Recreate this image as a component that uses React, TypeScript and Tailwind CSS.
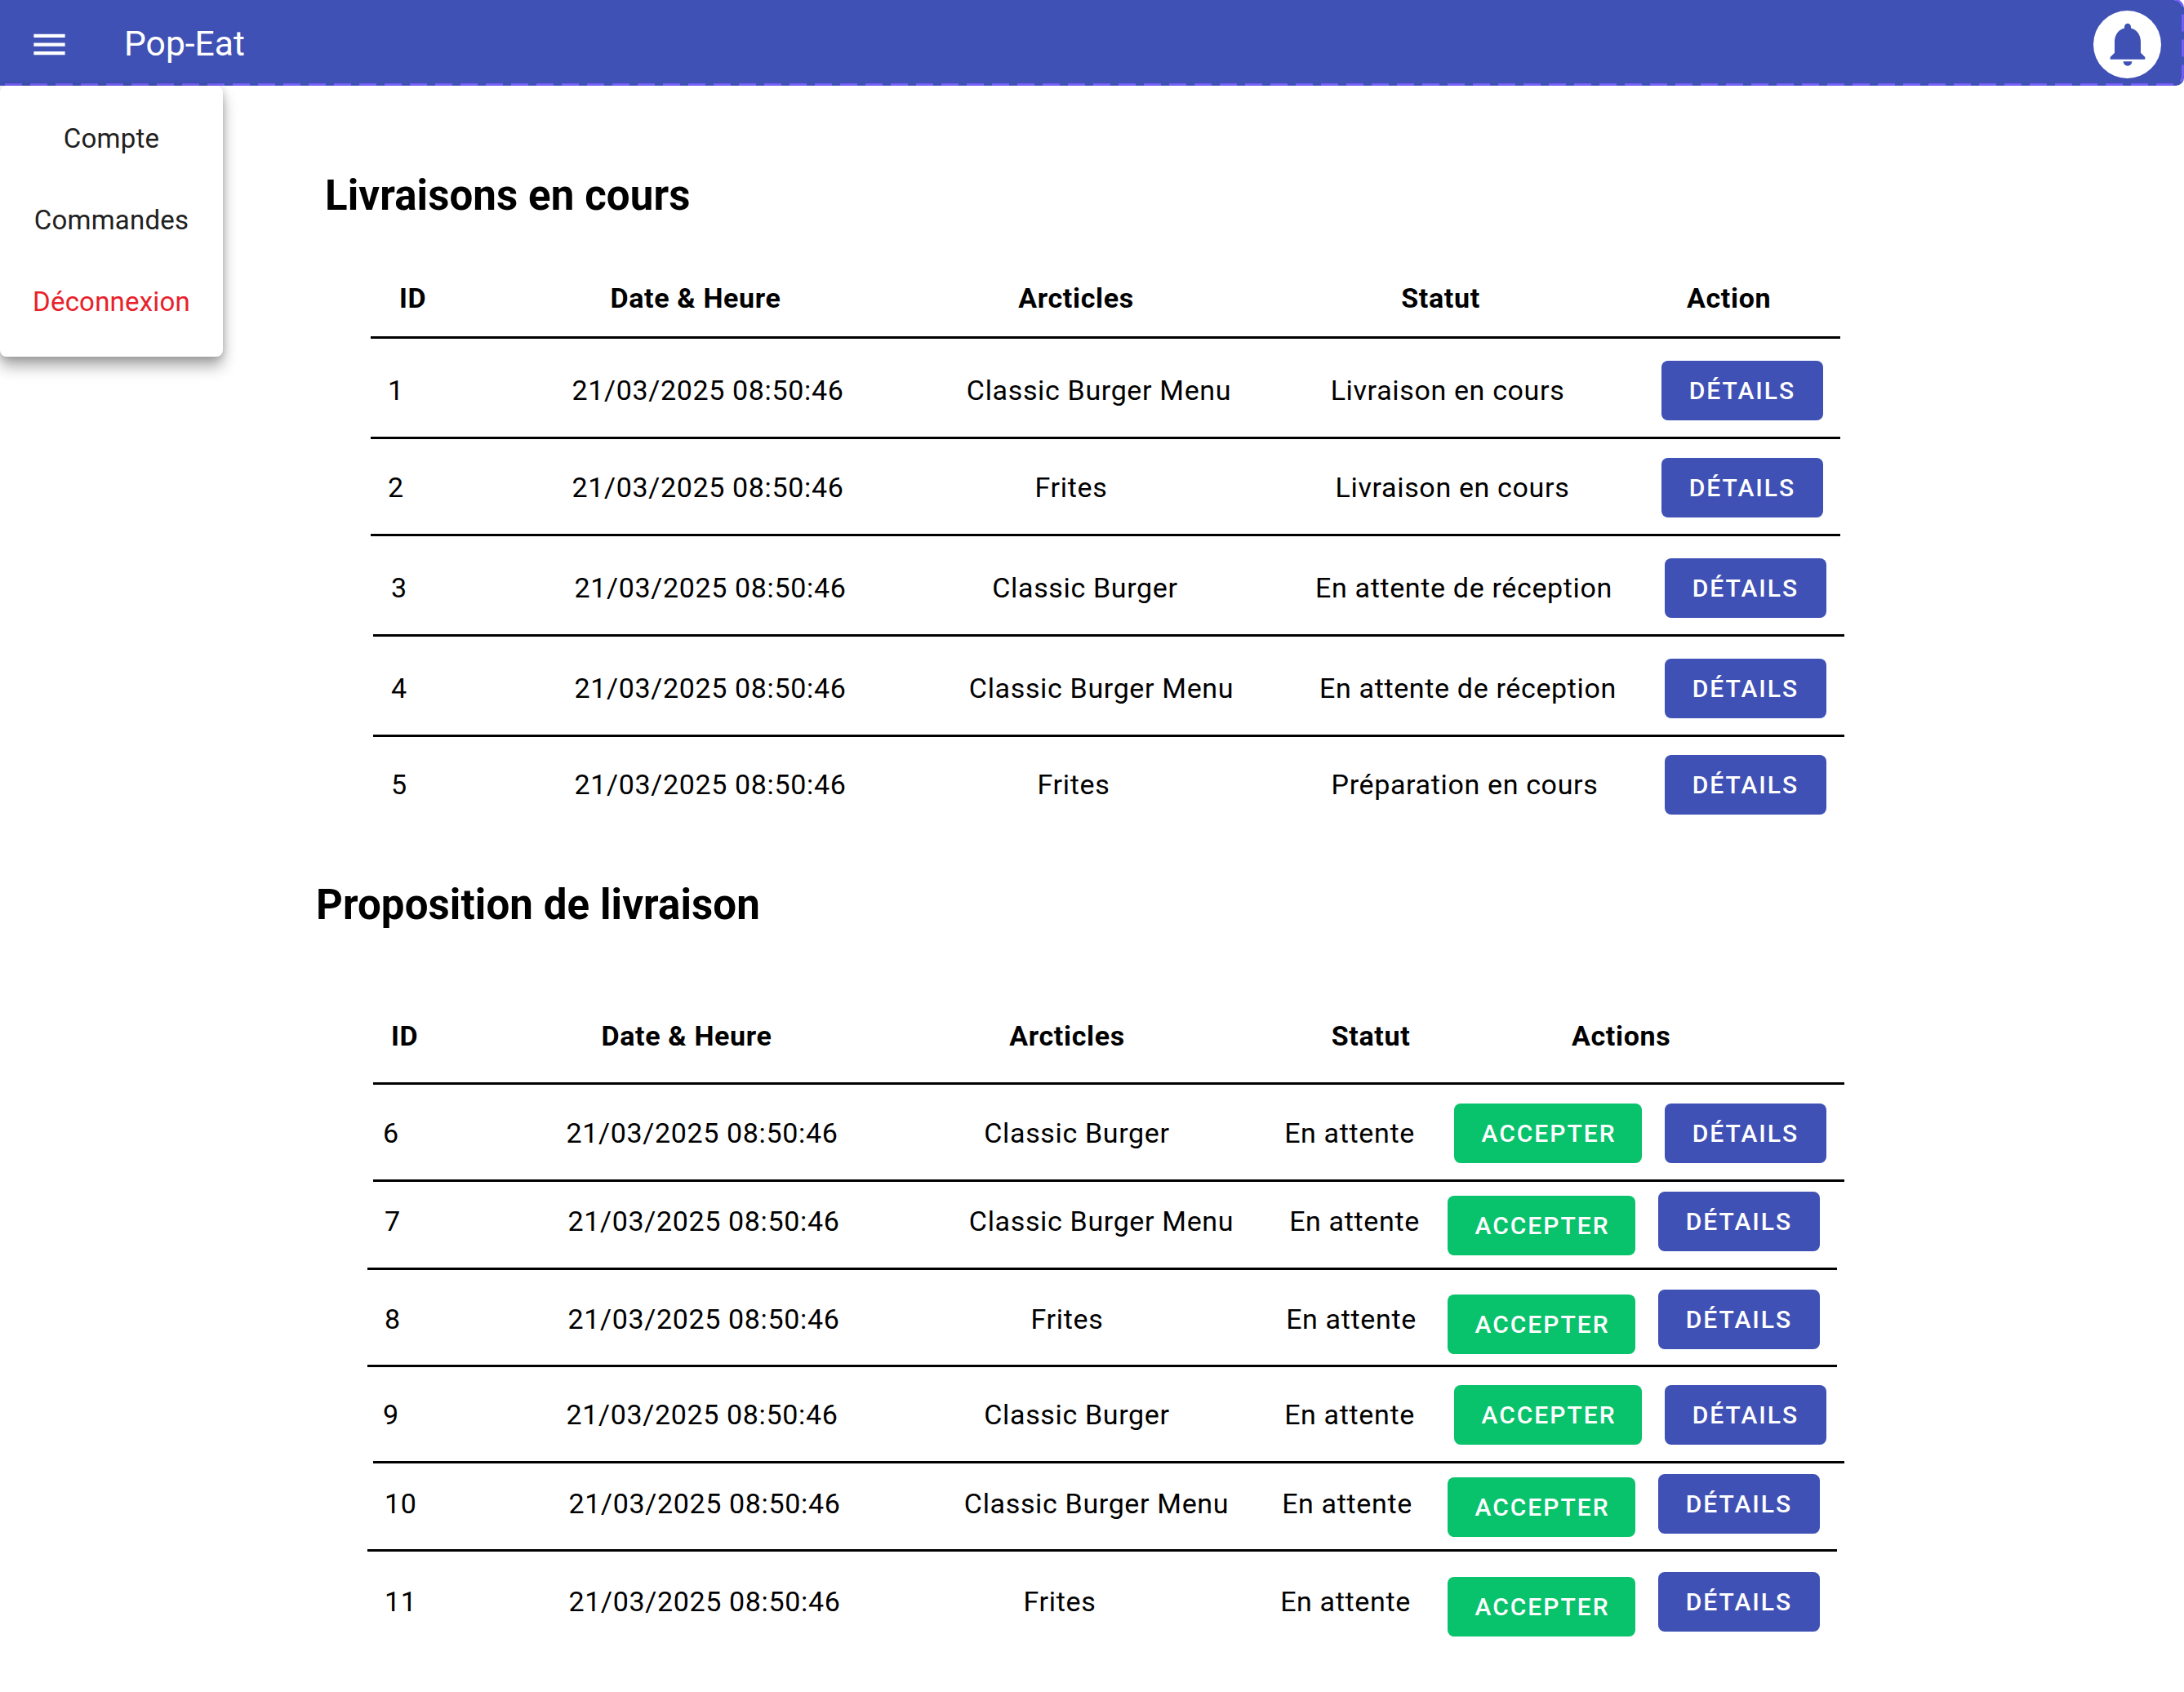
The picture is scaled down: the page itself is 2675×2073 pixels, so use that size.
import type { ReactNode } from "react";

const textCell = "flex justify-center whitespace-nowrap";

function DetailsButton({ className = "" }: { className?: string }) {
  return (
    <button className={`flex h-[73px] w-[198px] shrink-0 items-center justify-center rounded-[8px] bg-[#3f51b5] text-[30px] font-medium tracking-[2px] text-white ${className}`}>
      DÉTAILS
    </button>
  );
}

function AcceptButton({ className = "" }: { className?: string }) {
  return (
    <button className={`flex h-[73px] w-[230px] shrink-0 items-center justify-center rounded-[8px] bg-[#09c26c] pl-[2px] text-[30px] font-medium tracking-[2px] text-white ${className}`}>
      ACCEPTER
    </button>
  );
}

type RowProps = {
  grid: string;
  id: string;
  idPad: string;
  actionPad: string;
  article: string;
  status: string;
  date?: string;
  children: ReactNode;
};

function Row({ grid, id, idPad, actionPad, article, status, date = "21/03/2025 08:50:46", children }: RowProps) {
  return (
    <div className={`grid h-full items-center text-[34px] tracking-[0.65px] text-black ${grid}`}>
      <span className={idPad}>{id}</span>
      <span className={textCell}>{date}</span>
      <span className={textCell}>{article}</span>
      <span className={textCell}>{status}</span>
      <div className={`flex items-center justify-end ${actionPad}`}>{children}</div>
    </div>
  );
}

export default function App() {
  return (
    <div className="relative min-h-[2073px] overflow-hidden bg-white font-['Roboto',sans-serif]">
      <header className="relative flex h-[105px] items-center rounded-r-[10px] bg-[#3f51b5] pt-[3px] pr-[28px] pl-[35px] text-white">
        <svg viewBox="0 0 24 24" className="h-[51px] w-[51px] fill-white">
          <path d="M3 18h18v-2H3zm0-5h18v-2H3zm0-7h18v2H3z" />
        </svg>
        <span className="ml-[66px] text-[42.6px]">Pop-Eat</span>
        <div className="ml-auto flex h-[83px] w-[83px] items-center justify-center rounded-full bg-white">
          <svg viewBox="0 0 24 24" className="h-[64px] w-[64px] fill-[#3f51b5]">
            <path d="M12 22c1.1 0 2-.9 2-2h-4c0 1.1.89 2 2 2zm6-6v-5c0-3.07-1.64-5.64-4.5-6.32V4c0-.83-.67-1.5-1.5-1.5s-1.5.67-1.5 1.5v.68C7.63 5.36 6 7.92 6 11v5l-2 2v1h16v-1l-2-2z" />
          </svg>
        </div>
        <svg className="pointer-events-none absolute inset-0 h-full w-full fill-none stroke-[#7b61ff] stroke-[2.5]" strokeDasharray="21 10">
          <path d="M6 103.5H2663a10.5 10.5 0 0 0 10.5-10.5V10a10.5 10.5 0 0 0-10.5-10.5" />
        </svg>
      </header>

      <nav className="absolute top-[105px] left-0 flex h-[332px] w-[273px] flex-col items-center rounded-[8px] bg-white pt-[15px] text-[33px] tracking-[0.2px] shadow-[0_12px_18px_rgba(0,0,0,0.32),0_2px_10px_rgba(0,0,0,0.18)]">
        <a className="flex h-[100px] items-center text-[#212121]">Compte</a>
        <a className="flex h-[100px] items-center text-[#212121]">Commandes</a>
        <a className="flex h-[100px] items-center text-[#e8212b]">Déconnexion</a>
      </nav>

      <main>
        <h1 className="ml-[398px] pt-[105px] text-[51px] leading-[60px] font-bold tracking-[0.1px] text-black">Livraisons en cours</h1>

        <div className="mt-[48px] ml-[454px] w-[1800px]">
          <div className="grid h-[97px] grid-cols-[236px_350px_608px_250px_356px] items-center border-b-[3px] border-black text-[34px] font-bold tracking-[0.65px] text-black">
            <span className="pl-[35px]">ID</span>
            <span className={`${textCell} -ml-[26px]`}>Date &amp; Heure</span>
            <span className={`${textCell} -ml-[52px]`}>Arcticles</span>
            <span className={`${textCell} -ml-[17px]`}>Statut</span>
            <span className="pl-[168px]">Action</span>
          </div>
          <div className="h-[123px] border-b-[3px] border-black pt-[7px]">
            <Row grid="grid-cols-[238px_350px_608px_246px_358px]" actionPad="pr-[21px]" idPad="pl-[21px]" id="1" article="Classic Burger Menu" status="Livraison en cours">
              <DetailsButton />
            </Row>
          </div>
          <div className="h-[119px] border-b-[3px] border-black pt-[3px]">
            <Row grid="grid-cols-[238px_350px_540px_394px_278px]" actionPad="pr-[21px]" idPad="pl-[21px]" id="2" article="Frites" status="Livraison en cours">
              <DetailsButton />
            </Row>
          </div>
        </div>

        <div className="ml-[457px] w-[1802px]">
          <div className="h-[123px] border-b-[3px] border-black pt-[7px]">
            <Row grid="grid-cols-[238px_350px_568px_360px_286px]" actionPad="pr-[22px]" idPad="pl-[22px]" id="3" article="Classic Burger" status="En attente de réception">
              <DetailsButton />
            </Row>
          </div>
          <div className="h-[123px] border-b-[3px] border-black pt-[7px]">
            <Row grid="grid-cols-[238px_350px_608px_290px_316px]" actionPad="pr-[22px]" idPad="pl-[22px]" id="4" article="Classic Burger Menu" status="En attente de réception">
              <DetailsButton />
            </Row>
          </div>
          <div className="h-[120px] pb-[4px]">
            <Row grid="grid-cols-[238px_350px_540px_418px_256px]" actionPad="pr-[22px]" idPad="pl-[22px]" id="5" article="Frites" status="Préparation en cours">
              <DetailsButton />
            </Row>
          </div>
        </div>

        <h2 className="mt-[56px] ml-[387px] text-[51px] leading-[60px] font-bold tracking-[0.1px] text-black">Proposition de livraison</h2>

        <div className="mt-[74px] ml-[457px] w-[1802px]">
          <div className="grid h-[116px] grid-cols-[203px_400px_518px_150px_531px] items-center border-b-[3px] border-black text-[34px] font-bold tracking-[0.65px] text-black">
            <span className="pl-[22px]">ID</span>
            <span className={`${textCell} -ml-[38px]`}>Date &amp; Heure</span>
            <span className={`${textCell} -ml-[24px]`}>Arcticles</span>
            <span className={`${textCell} ml-[52px]`}>Statut</span>
            <span className="pl-[197px]">Actions</span>
          </div>
          <div className="h-[119px] border-b-[3px] border-black pt-[2px]">
            <Row grid="grid-cols-[203px_400px_518px_150px_531px]" actionPad="pr-[22px]" idPad="pl-[12px]" id="6" article="Classic Burger" status="En attente">
              <AcceptButton />
              <DetailsButton className="ml-[28px]" />
            </Row>
          </div>
        </div>

        <div className="ml-[450px] w-[1800px]">
          <div className="h-[108px] border-b-[3px] border-black pb-[8px]">
            <Row grid="grid-cols-[212px_400px_574px_46px_568px]" actionPad="pr-[21px]" idPad="pl-[21px]" id="7" article="Classic Burger Menu" status="En attente">
              <AcceptButton className="mt-[10px]" />
              <DetailsButton className="ml-[28px]" />
            </Row>
          </div>
          <div className="h-[119px] border-b-[3px] border-black pt-[4px]">
            <Row grid="grid-cols-[212px_400px_490px_206px_492px]" actionPad="pr-[21px]" idPad="pl-[21px]" id="8" article="Frites" status="En attente">
              <AcceptButton className="mt-[12px]" />
              <DetailsButton className="ml-[28px]" />
            </Row>
          </div>
        </div>

        <div className="ml-[457px] w-[1802px]">
          <div className="h-[118px] border-b-[3px] border-black pt-[2px]">
            <Row grid="grid-cols-[203px_400px_518px_150px_531px]" actionPad="pr-[22px]" idPad="pl-[12px]" id="9" article="Classic Burger" status="En attente">
              <AcceptButton />
              <DetailsButton className="ml-[28px]" />
            </Row>
          </div>
        </div>

        <div className="ml-[450px] w-[1800px]">
          <div className="h-[108px] border-b-[3px] border-black pb-[6px]">
            <Row grid="grid-cols-[213px_400px_560px_54px_573px]" actionPad="pr-[21px]" idPad="pl-[21px]" id="10" article="Classic Burger Menu" status="En attente">
              <AcceptButton className="mt-[8px]" />
              <DetailsButton className="ml-[28px]" />
            </Row>
          </div>
          <div className="h-[120px] pt-[2px]">
            <Row grid="grid-cols-[213px_400px_470px_230px_487px]" actionPad="pr-[21px]" idPad="pl-[21px]" id="11" article="Frites" status="En attente">
              <AcceptButton className="mt-[12px]" />
              <DetailsButton className="ml-[28px]" />
            </Row>
          </div>
        </div>
      </main>
    </div>
  );
}
